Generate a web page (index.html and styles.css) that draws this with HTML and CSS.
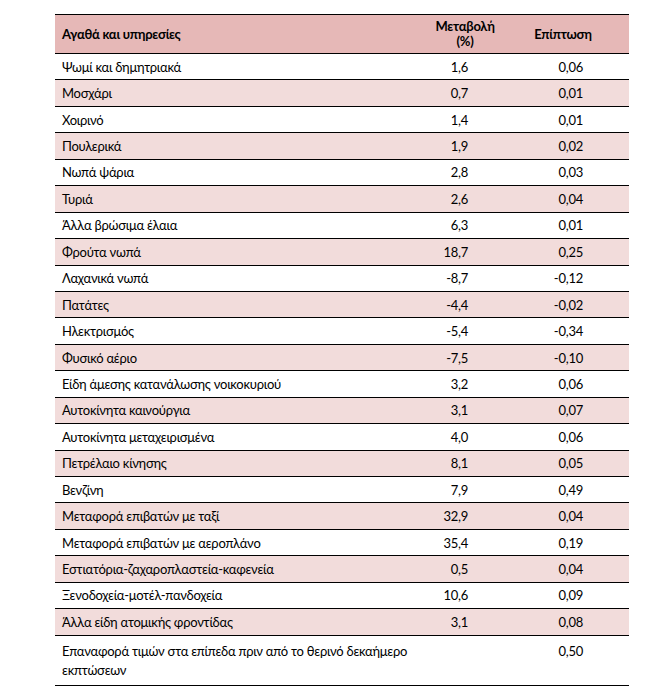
FILE: index.html
```html
<!DOCTYPE html>
<html lang="el">
<head>
<meta charset="utf-8">
<link rel="stylesheet" href="styles.css">
</head>
<body>
<div class="tbl">
  <div class="row head">
    <div class="c1">Αγαθά και υπηρεσίες</div>
    <div class="c2">Μεταβολή<br>(%)</div>
    <div class="c3">Επίπτωση</div>
  </div>
  <div class="row"><div class="c1">Ψωμί και δημητριακά</div><div class="c2">1,6</div><div class="c3">0,06</div></div>
  <div class="row alt"><div class="c1">Μοσχάρι</div><div class="c2">0,7</div><div class="c3">0,01</div></div>
  <div class="row"><div class="c1">Χοιρινό</div><div class="c2">1,4</div><div class="c3">0,01</div></div>
  <div class="row alt"><div class="c1">Πουλερικά</div><div class="c2">1,9</div><div class="c3">0,02</div></div>
  <div class="row"><div class="c1">Νωπά ψάρια</div><div class="c2">2,8</div><div class="c3">0,03</div></div>
  <div class="row alt"><div class="c1">Τυριά</div><div class="c2">2,6</div><div class="c3">0,04</div></div>
  <div class="row"><div class="c1">Άλλα βρώσιμα έλαια</div><div class="c2">6,3</div><div class="c3">0,01</div></div>
  <div class="row alt"><div class="c1">Φρούτα νωπά</div><div class="c2">18,7</div><div class="c3">0,25</div></div>
  <div class="row"><div class="c1">Λαχανικά νωπά</div><div class="c2">-8,7</div><div class="c3">-0,12</div></div>
  <div class="row alt"><div class="c1">Πατάτες</div><div class="c2">-4,4</div><div class="c3">-0,02</div></div>
  <div class="row"><div class="c1">Ηλεκτρισμός</div><div class="c2">-5,4</div><div class="c3">-0,34</div></div>
  <div class="row alt"><div class="c1">Φυσικό αέριο</div><div class="c2">-7,5</div><div class="c3">-0,10</div></div>
  <div class="row"><div class="c1">Είδη άμεσης κατανάλωσης νοικοκυριού</div><div class="c2">3,2</div><div class="c3">0,06</div></div>
  <div class="row alt"><div class="c1">Αυτοκίνητα καινούργια</div><div class="c2">3,1</div><div class="c3">0,07</div></div>
  <div class="row"><div class="c1">Αυτοκίνητα μεταχειρισμένα</div><div class="c2">4,0</div><div class="c3">0,06</div></div>
  <div class="row alt"><div class="c1">Πετρέλαιο κίνησης</div><div class="c2">8,1</div><div class="c3">0,05</div></div>
  <div class="row"><div class="c1">Βενζίνη</div><div class="c2">7,9</div><div class="c3">0,49</div></div>
  <div class="row alt"><div class="c1">Μεταφορά επιβατών με ταξί</div><div class="c2">32,9</div><div class="c3">0,04</div></div>
  <div class="row"><div class="c1">Μεταφορά επιβατών με αεροπλάνο</div><div class="c2">35,4</div><div class="c3">0,19</div></div>
  <div class="row alt"><div class="c1">Εστιατόρια-ζαχαροπλαστεία-καφενεία</div><div class="c2">0,5</div><div class="c3">0,04</div></div>
  <div class="row"><div class="c1">Ξενοδοχεία-μοτέλ-πανδοχεία</div><div class="c2">10,6</div><div class="c3">0,09</div></div>
  <div class="row alt"><div class="c1">Άλλα είδη ατομικής φροντίδας</div><div class="c2">3,1</div><div class="c3">0,08</div></div>
  <div class="row last"><div class="c1">Επαναφορά τιμών στα επίπεδα πριν από το θερινό δεκαήμερο εκπτώσεων</div><div class="c2"></div><div class="c3">0,50</div></div>
</div>
</body>
</html>
```

FILE: styles.css
```css
html, body {
  margin: 0;
  padding: 0;
  background: #ffffff;
}

body {
  font-family: Lato, "Noto Sans", sans-serif;
  font-size: 13px;
  letter-spacing: -0.25px;
  color: #000000;
}

.tbl {
  margin: 14px 0 0 55px;
  width: 574px;
  border-top: 1px solid #000;
}

.row {
  display: flex;
  align-items: center;
  height: 26.45px;
  box-sizing: border-box;
  border-bottom: 1px solid #000;
}

.row.alt {
  background: #f2dcdb;
}

.row.head {
  height: 39px;
  background: #e6b8b7;
  font-weight: bold;
  line-height: 15px;
}

.c1 {
  flex: 0 0 355px;
  padding-left: 7px;
  box-sizing: border-box;
}

.c2 {
  flex: 0 0 110px;
  text-align: right;
  padding-right: 52px;
  box-sizing: border-box;
}

.c3 {
  flex: 0 0 109px;
  text-align: right;
  padding-right: 46px;
  box-sizing: border-box;
}

.head .c2 {
  text-align: center;
  padding-right: 0;
  padding-left: 0;
}

.head .c3 {
  text-align: center;
  padding-right: 23px;
}

.row.last {
  height: 50px;
  align-items: flex-start;
  padding-top: 6px;
  line-height: 19px;
}
```
